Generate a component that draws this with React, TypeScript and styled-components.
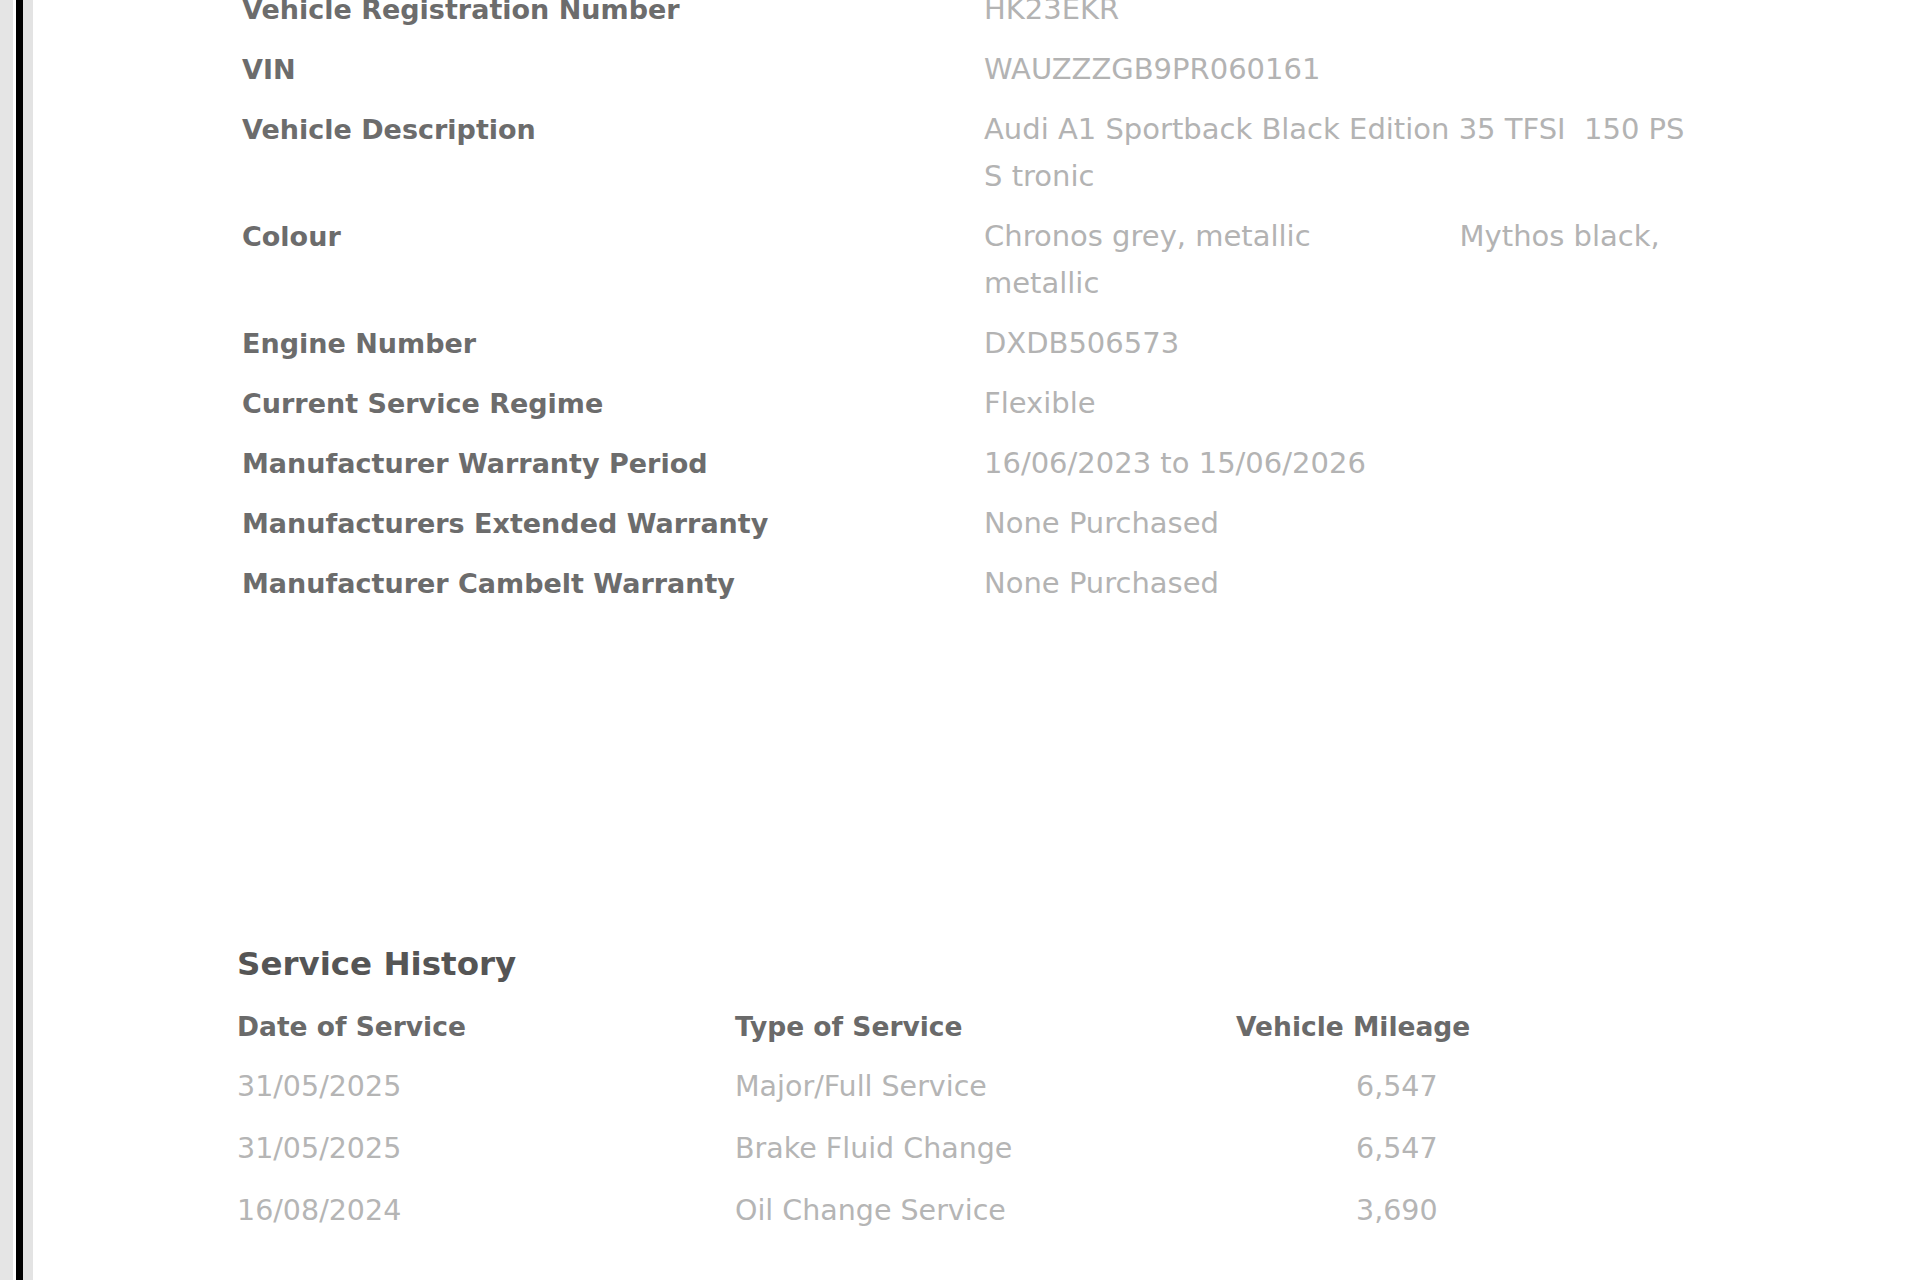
import React from "react";
import styled, { createGlobalStyle } from "styled-components";

const GlobalStyle = createGlobalStyle`
  html, body {
    margin: 0;
    padding: 0;
    background: #e5e5e5;
  }
  body {
    font-family: "DejaVu Sans", "Liberation Sans", sans-serif;
    overflow: hidden;
  }
`;

const Viewer = styled.div`
  display: flex;
  min-height: 100vh;
  height: 1280px;
  overflow: hidden;
  background: #e5e5e5;
  padding-left: 13px;
  box-sizing: border-box;
`;

const Sheet = styled.div`
  flex: 1;
  display: flex;
  background: #ffffff;
  padding-left: 3px;
`;

const Document = styled.main`
  flex: 1;
  background: #ffffff;
  border-left: 7px solid #000000;
  box-shadow: inset 10px 0 0 #e3e3e3;
  padding-left: 214px;
  overflow: hidden;
`;

const SpecList = styled.dl`
  display: grid;
  grid-template-columns: 742px 716px;
  row-gap: 13px;
  margin: -14px 0 0 5px;
  padding: 0;
`;

const SpecLabel = styled.dt`
  margin: 0;
  font-size: 27px;
  line-height: 47px;
  font-weight: 700;
  color: #6c6c6c;
`;

const SpecValue = styled.dd`
  margin: 0;
  font-size: 29px;
  line-height: 47px;
  font-weight: 400;
  color: #b3b3b3;
  white-space: pre-wrap;
`;

const Tone = styled.span<{ $offset?: number }>`
  margin-left: ${(p) => p.$offset ?? 0}px;
`;

const ServiceSection = styled.section`
  margin-top: 337px;
`;

const SectionTitle = styled.h2`
  margin: 0 0 21px;
  font-size: 32.5px;
  line-height: 40px;
  font-weight: 700;
  color: #555555;
`;

const TableRow = styled.div<{ $head?: boolean }>`
  display: grid;
  grid-template-columns: 498px 501px 300px;
  font-size: ${(p) => (p.$head ? 26.5 : 28.5)}px;
  line-height: 44px;
  font-weight: ${(p) => (p.$head ? 700 : 400)};
  color: ${(p) => (p.$head ? "#6a6a6a" : "#b5b5b5")};
  margin-bottom: ${(p) => (p.$head ? 16 : 18)}px;
`;

const Cell = styled.div<{ $indent?: number }>`
  padding-left: ${(p) => p.$indent ?? 0}px;
  white-space: nowrap;
`;

const specs: { label: string; value: React.ReactNode }[] = [
  { label: "Vehicle Registration Number", value: "HK23EKR" },
  { label: "VIN", value: "WAUZZZGB9PR060161" },
  {
    label: "Vehicle Description",
    value: "Audi A1 Sportback Black Edition 35 TFSI  150 PS S tronic",
  },
  {
    label: "Colour",
    value: (
      <>
        <Tone>Chronos grey, metallic</Tone>
        <Tone $offset={149}>Mythos black, metallic</Tone>
      </>
    ),
  },
  { label: "Engine Number", value: "DXDB506573" },
  { label: "Current Service Regime", value: "Flexible" },
  { label: "Manufacturer Warranty Period", value: "16/06/2023 to 15/06/2026" },
  { label: "Manufacturers Extended Warranty", value: "None Purchased" },
  { label: "Manufacturer Cambelt Warranty", value: "None Purchased" },
];

const services = [
  { date: "31/05/2025", type: "Major/Full Service", mileage: "6,547" },
  { date: "31/05/2025", type: "Brake Fluid Change", mileage: "6,547" },
  { date: "16/08/2024", type: "Oil Change Service", mileage: "3,690" },
];

export default function App() {
  return (
    <>
      <GlobalStyle />
      <Viewer>
        <Sheet>
          <Document>
            <SpecList>
              {specs.map((s) => (
                <React.Fragment key={s.label}>
                  <SpecLabel>{s.label}</SpecLabel>
                  <SpecValue>{s.value}</SpecValue>
                </React.Fragment>
              ))}
            </SpecList>
            <ServiceSection>
              <SectionTitle>Service History</SectionTitle>
              <TableRow $head>
                <Cell>Date of Service</Cell>
                <Cell>Type of Service</Cell>
                <Cell>Vehicle Mileage</Cell>
              </TableRow>
              {services.map((r, i) => (
                <TableRow key={i}>
                  <Cell>{r.date}</Cell>
                  <Cell>{r.type}</Cell>
                  <Cell $indent={120}>{r.mileage}</Cell>
                </TableRow>
              ))}
            </ServiceSection>
          </Document>
        </Sheet>
      </Viewer>
    </>
  );
}
